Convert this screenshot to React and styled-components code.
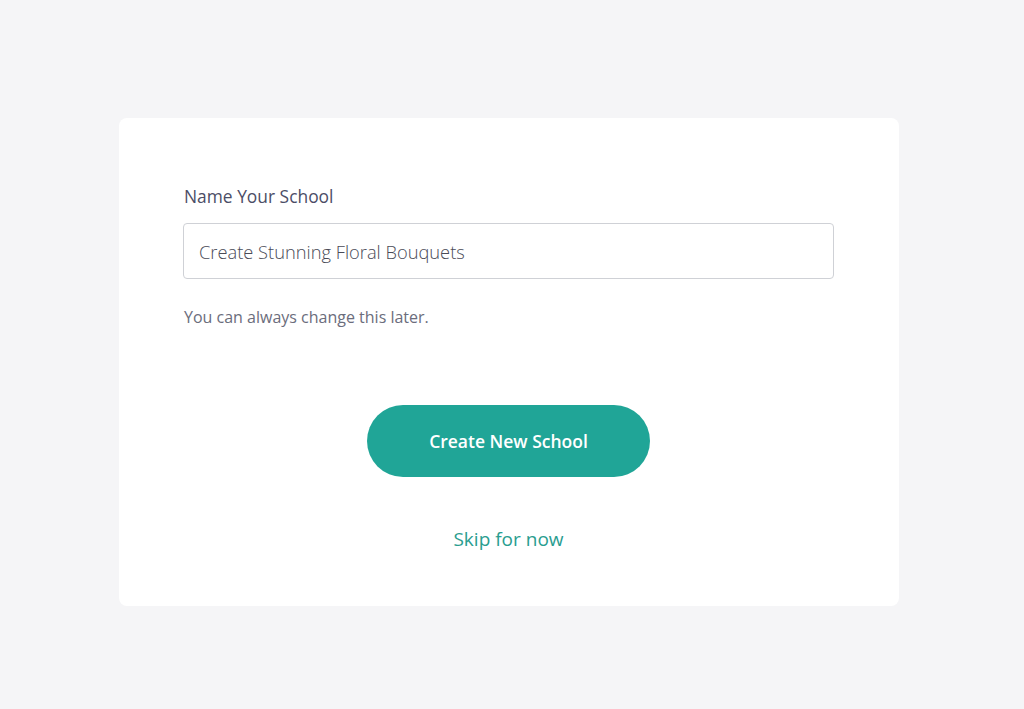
import React from "react";
import styled, { createGlobalStyle } from "styled-components";

const Global = createGlobalStyle`
  html, body { margin: 0; padding: 0; background: #f5f5f7; }
  body { font-family: "Open Sans", "Noto Sans", sans-serif; }
  * { box-sizing: border-box; }
`;

const Page = styled.div`
  width: 1024px;
  height: 709px;
  background: #f5f5f7;
  padding: 118px 0 0 119px;
`;

const Card = styled.div`
  width: 780px;
  height: 488px;
  background: #ffffff;
  border-radius: 8px;
  padding: 66px 65px 0 64px;
  display: flex;
  flex-direction: column;
`;

const Label = styled.label`
  font-size: 17.4px;
  color: #4b4d66;
  line-height: 24px;
  margin-left: 1px;
`;

const Input = styled.input`
  margin-top: 15px;
  height: 56px;
  width: 651px;
  border: 1px solid #cfd1d6;
  border-radius: 4px;
  padding: 0 15px;
  font-family: inherit;
  font-size: 18.3px;
  font-weight: 300;
  color: #4a4b57;
  outline: none;
`;

const Help = styled.p`
  margin: 27px 0 0 1px;
  font-size: 16px;
  line-height: 22px;
  color: #6b6d7c;
`;

const Actions = styled.div`
  display: flex;
  flex-direction: column;
  align-items: center;
  margin-top: 77px;
`;

const Primary = styled.button`
  width: 283px;
  height: 72px;
  border: none;
  border-radius: 36px;
  background: #20a597;
  color: #ffffff;
  font-family: inherit;
  font-size: 17.5px;
  font-weight: 600;
  cursor: pointer;
`;

const Skip = styled.a`
  margin-top: 48px;
  font-size: 19px;
  color: #2a9d8f;
  text-decoration: none;
  line-height: 28px;
  cursor: pointer;
`;

export default function App() {
  return (
    <>
      <Global />
      <Page>
        <Card>
          <Label htmlFor="school">Name Your School</Label>
          <Input id="school" defaultValue="Create Stunning Floral Bouquets" />
          <Help>You can always change this later.</Help>
          <Actions>
            <Primary>Create New School</Primary>
            <Skip>Skip for now</Skip>
          </Actions>
        </Card>
      </Page>
    </>
  );
}
